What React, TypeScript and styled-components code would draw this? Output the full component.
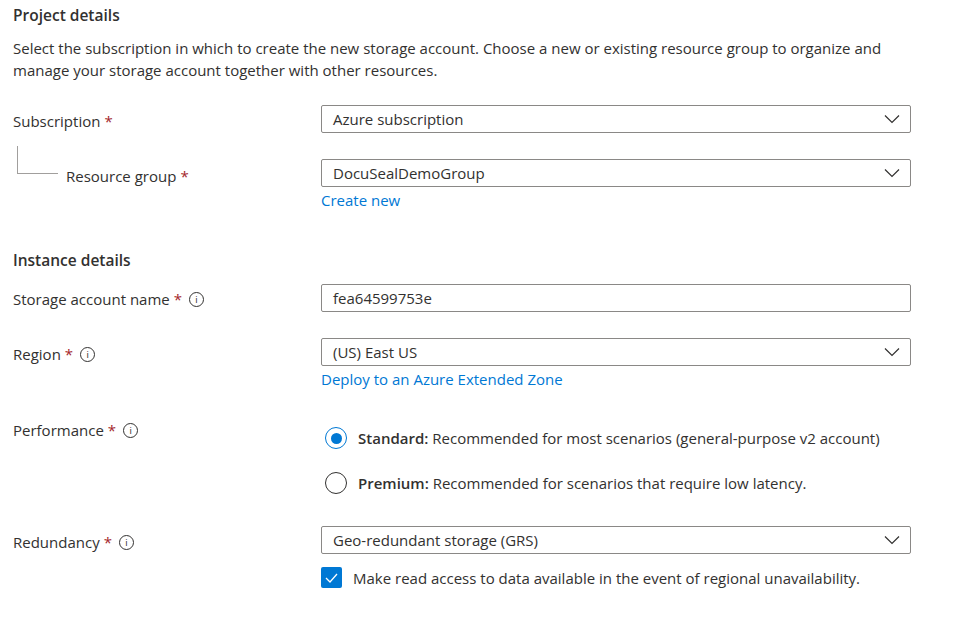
import React from "react";
import styled, { createGlobalStyle } from "styled-components";

const Global = createGlobalStyle`
  body { margin: 0; background: #fff; font-family: "Open Sans", "Noto Sans", sans-serif; color: #323130; font-size: 15px; }
`;
const Page = styled.div`padding: 3px 0 0 13px; width: 898px;`;
const H = styled.div<{ $mt?: number }>`font-weight: 600; font-size: 15.5px; line-height: 24px; margin-top: ${p => p.$mt ?? 0}px;`;
const P = styled.div`margin-top: 10px; line-height: 22px; font-size: 15px; width: 890px;`;
const Row = styled.div<{ $mt: number; $align?: string }>`
  display: flex; margin-top: ${p => p.$mt}px; align-items: ${p => p.$align ?? "flex-start"};
`;
const Label = styled.div<{ $indent?: number; $pt?: number }>`
  width: ${p => 308 - (p.$indent ?? 0)}px; padding-left: ${p => p.$indent ?? 0}px; padding-top: ${p => p.$pt ?? 4}px;
  display: flex; align-items: center; gap: 4px; font-size: 15px; line-height: 20px; flex-shrink: 0;
`;
const Star = styled.span`color: #a4262c;`;
const Info = styled.span`
  display: inline-flex; width: 13px; height: 13px; border: 1px solid #323130; border-radius: 50%;
  font-size: 9px; line-height: 1; align-items: center; justify-content: center; margin-left: 3px; font-family: "Noto Sans", sans-serif;
`;
const Control = styled.div<{ $pt?: number }>`width: 590px; display: flex; flex-direction: column; padding-top: ${p => p.$pt ?? 0}px;`;
const Box = styled.div`
  height: 28px; box-sizing: border-box; border: 1px solid #8a8886; border-radius: 2px;
  padding: 0 10px 0 11px; display: flex; align-items: center; justify-content: space-between; font-size: 15px;
`;
const Link = styled.div`color: #0078d4; font-size: 15px; line-height: 20px; margin-top: 3px;`;
const Tree = styled.div`
  position: relative; width: 0; height: 0;
  &::before { content: ""; position: absolute; left: 4px; top: 13px; width: 40px; height: 27px;
    border-left: 1px solid #a19f9d; border-bottom: 1px solid #a19f9d; }
`;
const RadioRow = styled.div<{ $mt: number }>`display: flex; align-items: center; gap: 11px; margin-top: ${p => p.$mt}px; padding-left: 4px; font-size: 15px;`;
const Radio = styled.span<{ $on?: boolean }>`
  width: 22px; height: 22px; box-sizing: border-box; border-radius: 50%;
  border: 1px solid ${p => (p.$on ? "#0078d4" : "#323130")}; display: flex; align-items: center; justify-content: center;
  &::after { content: ""; width: 11px; height: 11px; border-radius: 50%; background: ${p => (p.$on ? "#0078d4" : "transparent")}; }
`;
const Strong = styled.b`font-weight: 600;`;
const CheckRow = styled.div`display: flex; align-items: center; gap: 11px; margin-top: 13px; font-size: 15px;`;
const Check = styled.span`width: 21px; height: 21px; background: #0078d4; border-radius: 2px; display: flex; align-items: center; justify-content: center;`;

const Chevron = () => (
  <svg width="16" height="10" viewBox="0 0 16 10"><path d="M1 1.5l7 7 7-7" fill="none" stroke="#323130" strokeWidth="1.2" /></svg>
);
const Select = ({ v }: { v: string }) => <Box>{v}<Chevron /></Box>;

export default function App() {
  return (
    <>
      <Global />
      <Page>
        <H>Project details</H>
        <P>Select the subscription in which to create the new storage account. Choose a new or existing resource group to organize and manage your storage account together with other resources.</P>
        <Row $mt={24}>
          <Label $pt={6}>Subscription <Star>*</Star></Label>
          <Control><Select v="Azure subscription" /></Control>
        </Row>
        <Tree />
        <Row $mt={26}>
          <Label $indent={53} $pt={7}>Resource group <Star>*</Star></Label>
          <Control><Select v="DocuSealDemoGroup" /><Link>Create new</Link></Control>
        </Row>
        <H $mt={38}>Instance details</H>
        <Row $mt={12}>
          <Label $pt={5}>Storage account name <Star>*</Star><Info>i</Info></Label>
          <Control><Box>fea64599753e</Box></Control>
        </Row>
        <Row $mt={26}>
          <Label $pt={6}>Region <Star>*</Star><Info>i</Info></Label>
          <Control><Select v="(US) East US" /><Link>Deploy to an Azure Extended Zone</Link></Control>
        </Row>
        <Row $mt={31}>
          <Label $pt={0}>Performance <Star>*</Star><Info>i</Info></Label>
          <Control $pt={7}>
            <RadioRow $mt={0}><Radio $on /><span><Strong>Standard:</Strong> Recommended for most scenarios (general-purpose v2 account)</span></RadioRow>
            <RadioRow $mt={23}><Radio /><span><Strong>Premium:</Strong> Recommended for scenarios that require low latency.</span></RadioRow>
          </Control>
        </Row>
        <Row $mt={32}>
          <Label $pt={6}>Redundancy <Star>*</Star><Info>i</Info></Label>
          <Control>
            <Select v="Geo-redundant storage (GRS)" />
            <CheckRow>
              <Check><svg width="13" height="10" viewBox="0 0 13 10"><path d="M1 5l4 4 7-8" fill="none" stroke="#fff" strokeWidth="1.3" /></svg></Check>
              Make read access to data available in the event of regional unavailability.
            </CheckRow>
          </Control>
        </Row>
      </Page>
    </>
  );
}
